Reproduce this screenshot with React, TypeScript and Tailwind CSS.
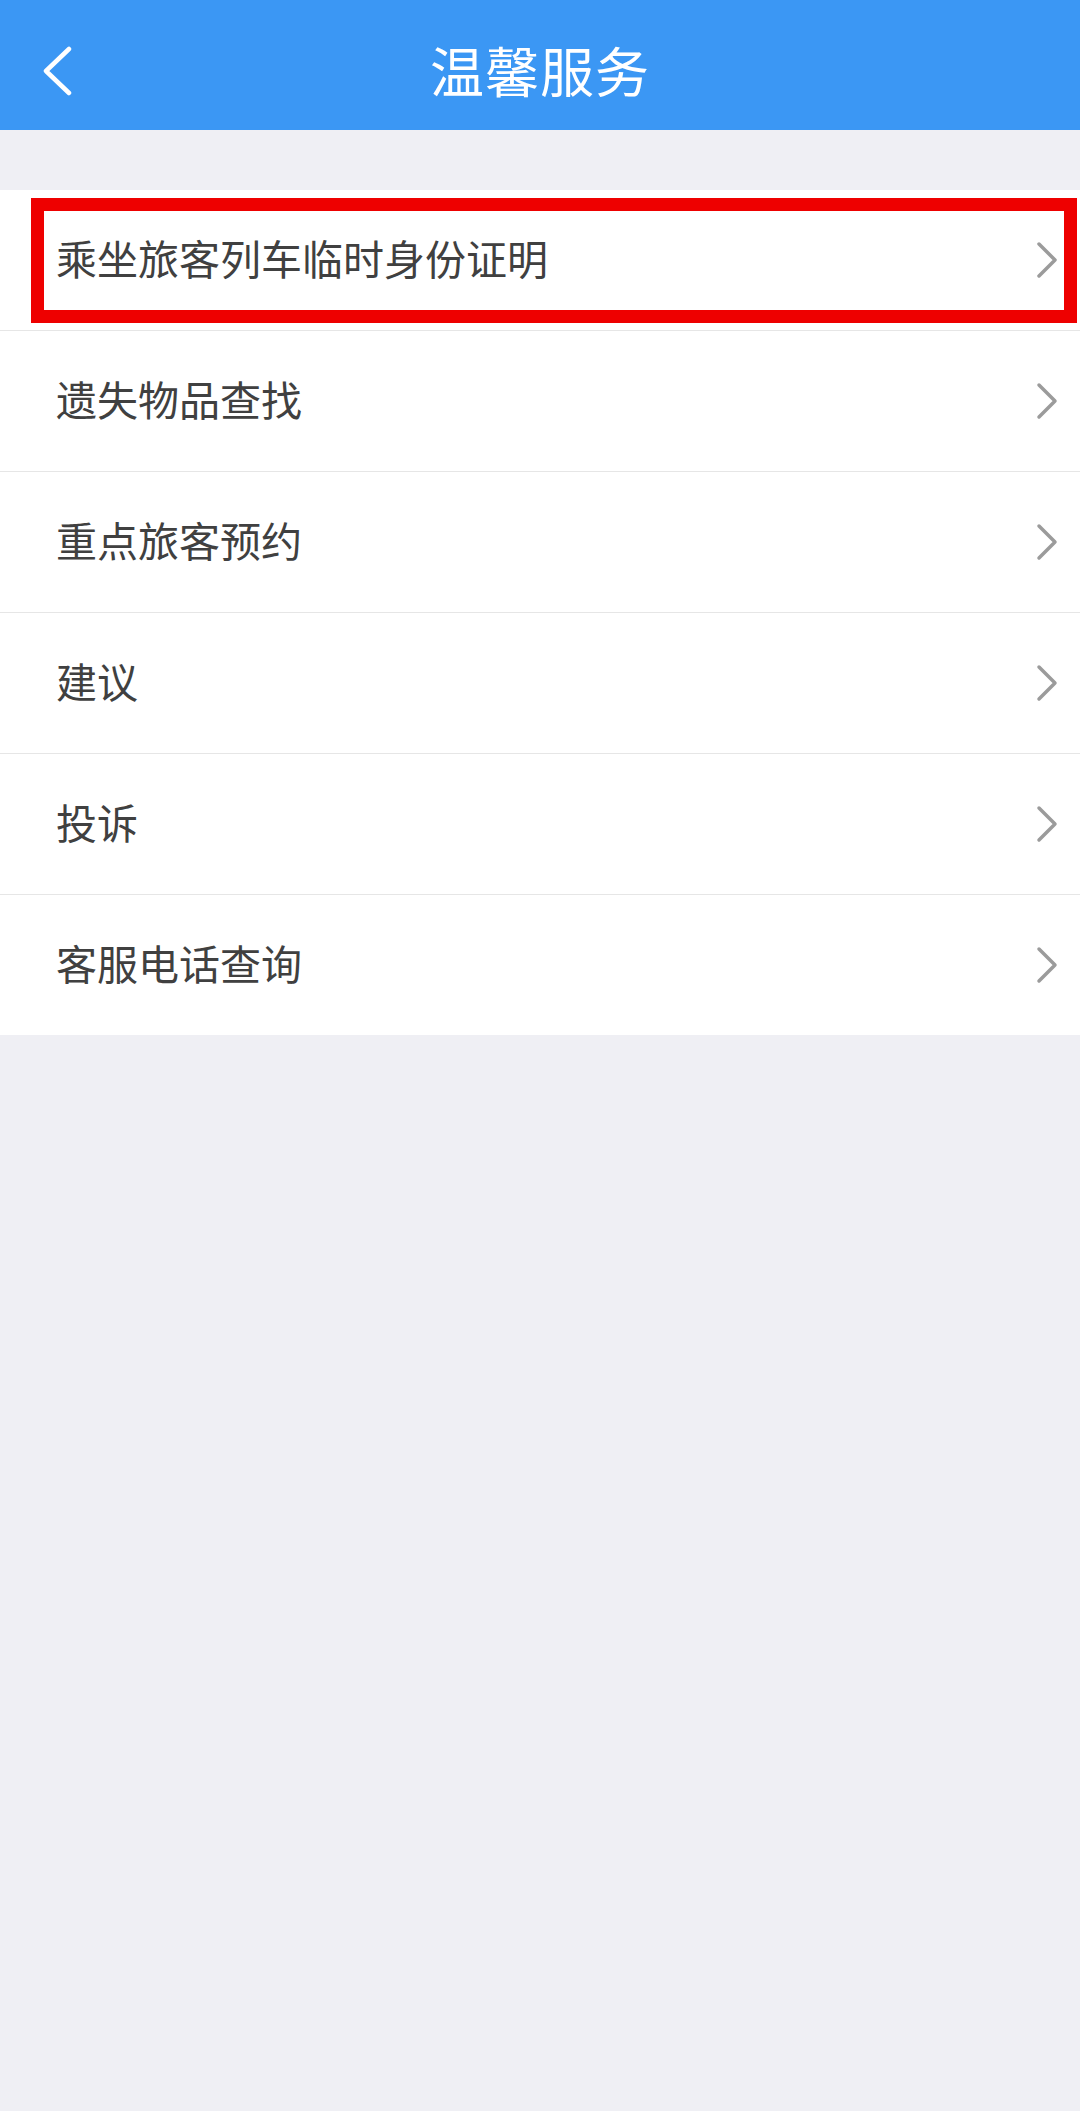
import React from 'react'

const items = ['乘坐旅客列车临时身份证明', '遗失物品查找', '重点旅客预约', '建议', '投诉', '客服电话查询']

const Chevron = () => (
  <svg width="24" height="38" viewBox="0 0 24 38" fill="none" className="shrink-0">
    <path d="M4 3 L20 19 L4 35" stroke="#9b9b9b" strokeWidth="3.5" strokeLinecap="round" strokeLinejoin="round" />
  </svg>
)

export default function App() {
  return (
    <div
      className="min-h-[2111px] w-[1080px] bg-[#efeff4]"
      style={{ fontFamily: '"Noto Sans CJK SC", "Noto Sans", sans-serif' }}
    >
      {/* header */}
      <div className="relative flex h-[130px] items-center justify-center bg-[#3b97f4]">
        <button className="absolute left-[40px] top-[46px]">
          <svg width="34" height="50" viewBox="0 0 34 50" fill="none">
            <path d="M29 3 L6 25 L29 47" stroke="white" strokeWidth="4.5" strokeLinecap="round" strokeLinejoin="round" />
          </svg>
        </button>
        <h1 className="mt-[8px] text-[54px] font-normal tracking-[1px] text-white">温馨服务</h1>
      </div>

      {/* list */}
      <div className="mt-[60px] bg-white">
        {items.map((item, i) => (
          <div
            key={item}
            className={
              'relative flex items-center justify-between pl-[56px] pr-[21px] ' +
              (i < items.length - 1 ? 'h-[141px] border-b border-[#e6e6e6]' : 'h-[140px]')
            }
          >
            <span className="mb-[5px] text-[41px] leading-none text-[#404040]">{item}</span>
            <Chevron />
            {i === 0 && (
              <div className="pointer-events-none absolute left-[31px] right-[3px] top-[8px] bottom-[7px] border-[13px] border-[#ee0000]" />
            )}
          </div>
        ))}
      </div>
    </div>
  )
}
